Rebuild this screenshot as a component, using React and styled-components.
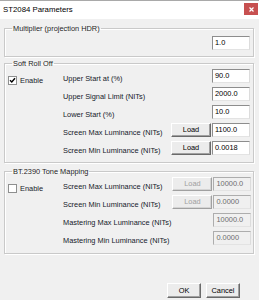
import React from "react";
import styled, { createGlobalStyle, css } from "styled-components";

const GlobalStyle = createGlobalStyle`
  html, body {
    margin: 0;
    padding: 0;
    background: #f0f0f0;
  }
  body {
    font-family: "Liberation Sans", Arial, sans-serif;
  }
`;

const Window = styled.div`
  width: 259px;
  height: 300px;
  box-sizing: border-box;
  border-top: 1px solid #a9a9a9;
  background: #f0f0f0;
  display: flex;
  flex-direction: column;
  overflow: hidden;
`;

const TitleBar = styled.div`
  height: 18px;
  flex: none;
  background: #fff;
  display: flex;
  align-items: flex-start;
  justify-content: space-between;
`;

const Title = styled.span`
  font-size: 7.8px;
  line-height: 10px;
  color: #000;
  padding: 4px 0 0 3px;
`;

const CloseButton = styled.div`
  width: 14px;
  height: 12px;
  margin: 2px 1px 0 0;
  background: #c75050;
  color: #fff;
  display: flex;
  align-items: center;
  justify-content: center;
`;

const Body = styled.div`
  flex: 1;
  display: flex;
  flex-direction: column;
  padding: 5px 5px 0 4px;
`;

const Group = styled.fieldset`
  margin: ${p => p.$top || 0}px 0 0 0;
  padding: 0 3px ${p => p.$bottom || 6}px 2px;
  border: 1px solid #c9c9c9;
  box-shadow: 1px 1px 0 #fff, inset 1px 1px 0 #fff;
  min-width: 0;
`;

const Legend = styled.legend`
  font-size: 7.4px;
  line-height: 9px;
  color: #1e1e1e;
  padding: 0 1px;
  margin-left: 5px;
`;

const Rows = styled.div`
  display: grid;
  grid-template-columns: 55px 1fr 40px 38px;
  grid-auto-rows: 14px;
  column-gap: 1px;
  row-gap: 4px;
  padding-top: ${p => p.$top || 0}px;
`;

const Cell = styled.div`
  min-width: 0;
`;

const Label = styled.span`
  font-size: 7.4px;
  line-height: 10px;
  padding-top: 5px;
  color: #151a2a;
  white-space: nowrap;
`;

const EnableCell = styled.label`
  display: flex;
  align-items: center;
  gap: 3px;
  margin-top: 7px;
  height: 9px;
  font-size: 7.4px;
  color: #151a2a;
  padding-left: 1px;
`;

const CheckBox = styled.span`
  width: 7px;
  height: 7px;
  flex: none;
  background: #fff;
  border: 1px solid #8e8f8f;
  display: flex;
  align-items: center;
  justify-content: center;
`;

const Input = styled.div`
  box-sizing: border-box;
  height: 14px;
  border: 1px solid;
  border-color: #8d8d8d #dcdcdc #e3e3e3 #8d8d8d;
  background: #fff;
  font-size: 7.4px;
  line-height: 12px;
  padding-left: 2px;
  color: #000;
  ${p =>
    p.$disabled &&
    css`
      background: #f0f0f0;
      border-color: #adadad #dcdcdc #e3e3e3 #adadad;
      color: #6d6d6d;
    `}
`;

const Button = styled.div`
  box-sizing: border-box;
  height: 14px;
  background: #ececec;
  border: 1px solid;
  border-color: #fff #6a6a6a #6a6a6a #fff;
  box-shadow: inset -1px -1px 0 #a0a0a0;
  font-size: 7.4px;
  line-height: 12px;
  text-align: center;
  color: #000;
  ${p =>
    p.$disabled &&
    css`
      color: #a0a0a0;
      border-color: #fff #a0a0a0 #a0a0a0 #fff;
      box-shadow: inset -1px -1px 0 #d4d4d4;
    `}
`;

const Footer = styled.div`
  margin-top: auto;
  display: flex;
  justify-content: flex-end;
  gap: 5px;
  padding: 0 14px 2px 0;
`;

const FooterButton = styled(Button)`
  width: 34px;
  height: 15px;
  line-height: 13px;
`;

const Check = () => (
  <svg width="7" height="7" viewBox="0 0 7 7">
    <path d="M1 3.2 L2.8 5 L6 1.2" fill="none" stroke="#000" strokeWidth="1.4" />
  </svg>
);

const Row = ({ enable, checked, label, load, value, disabled }) => (
  <>
    {enable ? (
      <EnableCell>
        <CheckBox>{checked && <Check />}</CheckBox>
        Enable
      </EnableCell>
    ) : (
      <Cell />
    )}
    <Label>{label}</Label>
    {load ? <Button $disabled={disabled}>Load</Button> : <Cell />}
    <Input $disabled={disabled}>{value}</Input>
  </>
);

const softRows = [
  { label: "Upper Start at (%)", value: "90.0" },
  { label: "Upper Signal Limit (NITs)", value: "2000.0" },
  { label: "Lower Start (%)", value: "10.0" },
  { label: "Screen Max Luminance (NITs)", value: "1100.0", load: true },
  { label: "Screen Min Luminance (NITs)", value: "0.0018", load: true },
];

const btRows = [
  { label: "Screen Max Luminance (NITs)", value: "10000.0", load: true },
  { label: "Screen Min Luminance (NITs)", value: "0.0000", load: true },
  { label: "Mastering Max Luminance (NITs)", value: "10000.0" },
  { label: "Mastering Min Luminance (NITs)", value: "0.0000" },
];

export default function App() {
  return (
    <Window>
      <GlobalStyle />
      <TitleBar>
        <Title>ST2084 Parameters</Title>
        <CloseButton>
          <svg width="5" height="5" viewBox="0 0 5 5">
            <path d="M0.5 0.5 L4.5 4.5 M4.5 0.5 L0.5 4.5" stroke="#fff" strokeWidth="1.2" />
          </svg>
        </CloseButton>
      </TitleBar>
      <Body>
        <Group $bottom={6}>
          <Legend>Multiplier (projection HDR)</Legend>
          <Rows $top={3}>
            <Cell />
            <Cell />
            <Cell />
            <Input>1.0</Input>
          </Rows>
        </Group>

        <Group $top={2} $bottom={7}>
          <Legend>Soft Roll Off</Legend>
          <Rows $top={1}>
            {softRows.map((r, i) => (
              <Row key={r.label} {...r} enable={i === 0} checked />
            ))}
          </Rows>
        </Group>

        <Group $top={4} $bottom={8}>
          <Legend>BT.2390 Tone Mapping</Legend>
          <Rows $top={1}>
            {btRows.map((r, i) => (
              <Row
                key={r.label}
                {...r}
                enable={i === 0}
                checked={false}
                disabled
              />
            ))}
          </Rows>
        </Group>

        <Footer>
          <FooterButton>OK</FooterButton>
          <FooterButton>Cancel</FooterButton>
        </Footer>
      </Body>
    </Window>
  );
}
